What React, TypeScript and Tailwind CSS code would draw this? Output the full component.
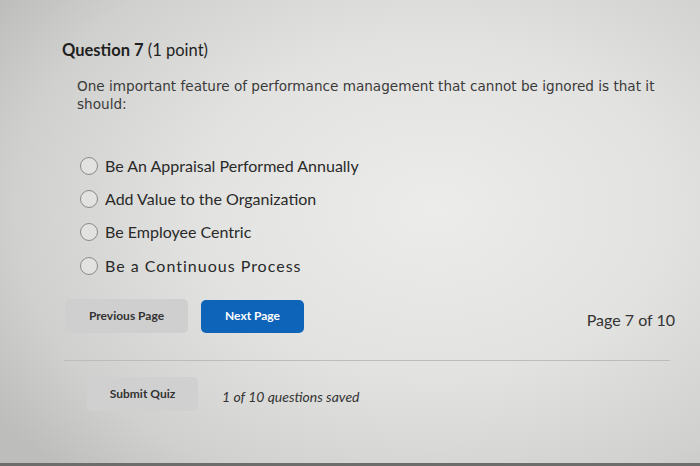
const options = [
  { label: "Be An Appraisal Performed Annually", tracking: "" },
  { label: "Add Value to the Organization", tracking: "" },
  { label: "Be Employee Centric", tracking: "" },
  { label: "Be a Continuous Process", tracking: "tracking-[1px]" }
];

const Radio = ({ label, tracking }: { label: string; tracking: string }) => (
  <label className="flex h-[33.3px] items-center gap-[7px]">
    <span className="h-[18px] w-[18px] shrink-0 rounded-full border border-[#8a8a8a] bg-[#e2e2e0]" />
    <span className={`text-[16px] text-[#2a2a2a] ${tracking}`}>{label}</span>
  </label>
);

export default function App() {
  return (
    <div className="relative h-[466px] w-full overflow-hidden bg-[radial-gradient(ellipse_75%_80%_at_62%_45%,#ececea_0%,#e2e2e0_45%,#d0d0ce_80%,#bdbdbb_100%)] font-['Lato',sans-serif] text-[#222]">
      <div className="pl-[62px] pr-[25px] pt-[38px]">
        <h1 className="text-[16.5px] leading-[24px] text-[#1f1f1f]">
          <span className="font-bold">Question 7</span> (1 point)
        </h1>
        <p className="mt-[15px] pl-[15px] pr-[10px] font-['DejaVu_Sans',sans-serif] text-[13.6px] leading-[18px] text-[#3a3a3a]">
          One important feature of performance management that cannot be ignored is that it should:
        </p>
        <div className="mt-[36px] flex flex-col pl-[18px]">
          {options.map((option) => (
            <Radio key={option.label} label={option.label} tracking={option.tracking} />
          ))}
        </div>
        <div className="mt-[17px] flex items-center">
          <button className="ml-[3px] h-[34px] w-[123px] rounded-[5px] bg-[#cfcfcf] text-[12px] font-bold text-[#333]">
            Previous Page
          </button>
          <button className="ml-[13px] h-[33px] w-[103px] rounded-[5px] bg-[#0e64b9] text-[12px] font-bold text-white">
            Next Page
          </button>
          <span className="ml-auto mt-[8px] text-[16px] text-[#333]">Page 7 of 10</span>
        </div>
        <div className="ml-[2px] mr-[5px] mt-[27px] h-px bg-[#bcbcba]" />
        <div className="mt-[16px] flex items-center">
          <button className="ml-[25px] h-[34px] w-[111px] rounded-[5px] bg-[#d0d0d0] text-[12px] font-bold text-[#333]">
            Submit Quiz
          </button>
          <span className="ml-[24px] mt-[4px] text-[14px] italic text-[#333]">1 of 10 questions saved</span>
        </div>
      </div>
      <div className="absolute bottom-0 left-0 h-[3px] w-full bg-[#6d6d6b]" />
    </div>
  );
}
